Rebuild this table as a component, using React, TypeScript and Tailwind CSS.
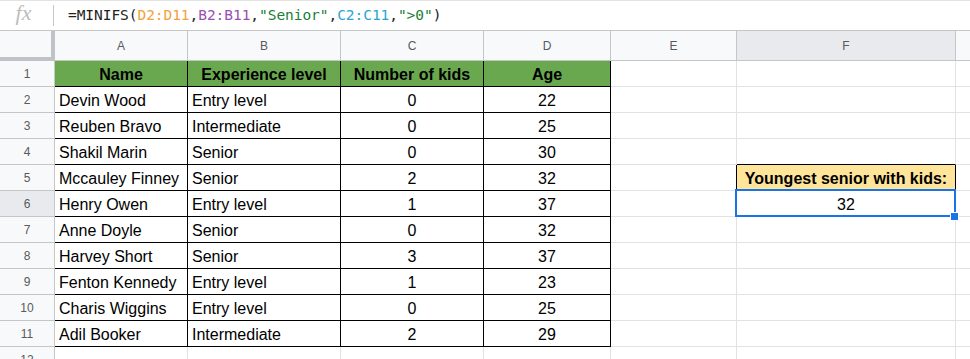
import React from "react";

const rows: [string, string, string, string][] = [
  ["Name", "Experience level", "Number of kids", "Age"],
  ["Devin Wood", "Entry level", "0", "22"],
  ["Reuben Bravo", "Intermediate", "0", "25"],
  ["Shakil Marin", "Senior", "0", "30"],
  ["Mccauley Finney", "Senior", "2", "32"],
  ["Henry Owen", "Entry level", "1", "37"],
  ["Anne Doyle", "Senior", "0", "32"],
  ["Harvey Short", "Senior", "3", "37"],
  ["Fenton Kennedy", "Entry level", "1", "23"],
  ["Charis Wiggins", "Entry level", "0", "25"],
  ["Adil Booker", "Intermediate", "2", "29"],
];

export default function App() {
  const font = { fontFamily: '"Liberation Sans", Arial, sans-serif' };

  return (
    <div className="w-[970px] h-[359px] overflow-hidden bg-white text-black" style={font}>
      {/* formula bar */}
      <div className="h-[31px] border-t border-b border-t-[#e3e3e3] border-b-[#c4c7c5] flex items-center">
        <div className="w-[53px] flex justify-center">
          <span className="italic text-[22px] leading-none text-[#bdbdbd] -mt-[6px] -ml-[6px] font-['Liberation_Serif',serif]">fx</span>
        </div>
        <div className="w-px h-[21px] bg-[#c4c7c5]" />
        <div className="pl-[14px] text-[14.5px] text-[#222] font-['DejaVu_Sans_Mono',monospace] tracking-[-0.05px]">
          =MINIFS(<span className="text-[#f4a13b]">D2:D11</span>,<span className="text-[#9a4fb0]">B2:B11</span>,<span className="text-[#188038]">"Senior"</span>,<span className="text-[#2aa4cf]">C2:C11</span>,<span className="text-[#188038]">"&gt;0"</span>)
        </div>
      </div>

      {/* column headers */}
      <div className="flex h-[30px] text-[12px] text-[#575a5e]">
        <div className="w-[55px] shrink-0 bg-[#f8f9fa] border-r-4 border-b-4 border-[#bfc3c7]" />
        <div className="w-[133px] shrink-0 flex items-center justify-center bg-[#f8f9fa] border-r border-b border-[#c4c7c5]">A</div>
        <div className="w-[153px] shrink-0 flex items-center justify-center bg-[#f8f9fa] border-r border-b border-[#c4c7c5]">B</div>
        <div className="w-[143px] shrink-0 flex items-center justify-center bg-[#f8f9fa] border-r border-b border-[#c4c7c5]">C</div>
        <div className="w-[127px] shrink-0 flex items-center justify-center bg-[#f8f9fa] border-r border-b border-[#c4c7c5]">D</div>
        <div className="w-[126px] shrink-0 flex items-center justify-center bg-[#f8f9fa] border-r border-b border-[#c4c7c5]">E</div>
        <div className="w-[219px] shrink-0 flex items-center justify-center bg-[#e8eaed] border-r border-b border-[#c4c7c5]">F</div>
        <div className="flex-1 bg-[#f8f9fa] border-b border-[#c4c7c5]" />
      </div>

      {/* rows */}
      {Array.from({ length: 12 }, (_, i) => {
        const n = i + 1;
        const data = rows[i];
        const head = n === 1;
        const tbl = data
          ? "border-r border-b border-black " + (head ? "bg-[#6aa84f] font-bold" : "")
          : "border-r border-b border-[#e2e2e2]";
        return (
          <div key={n} className="flex h-[26px] text-[16px]">
            <div
              className={`w-[55px] shrink-0 flex items-center justify-center text-[12px] text-[#575a5e] border-r border-b border-[#c4c7c5] ${
                n === 6 ? "bg-[#e8eaed]" : "bg-[#f8f9fa]"
              }`}
            >
              {n}
            </div>
            <div className={`w-[133px] shrink-0 flex items-center pt-[2px] whitespace-nowrap ${head ? "justify-center" : "pl-[4px]"} ${tbl}`}>
              {data?.[0]}
            </div>
            <div className={`w-[153px] shrink-0 flex items-center pt-[2px] whitespace-nowrap ${head ? "justify-center" : "pl-[4px]"} ${tbl}`}>
              {data?.[1]}
            </div>
            <div className={`w-[143px] shrink-0 flex items-center justify-center pt-[2px] whitespace-nowrap ${tbl}`}>{data?.[2]}</div>
            <div className={`w-[127px] shrink-0 flex items-center justify-center pt-[2px] whitespace-nowrap ${tbl}`}>{data?.[3]}</div>
            <div
              className={`w-[126px] shrink-0 border-b border-b-[#e2e2e2] border-r ${
                n === 5 ? "border-r-black" : "border-r-[#e2e2e2]"
              }`}
            />
            {n === 5 ? (
              <div className="w-[219px] shrink-0 flex items-center justify-center pt-[2px] bg-[#ffe599] font-bold whitespace-nowrap border-r border-b border-black">
                Youngest senior with kids:
              </div>
            ) : n === 6 ? (
              <div className="relative w-[219px] shrink-0 flex items-center justify-center pt-[2px] border-r border-b border-[#e2e2e2]">
                32
                <div className="absolute -top-[2px] -left-[2px] -right-[1px] -bottom-[1px] border-2 border-[#1a73e8]" />
                <div className="absolute -right-[4px] -bottom-[5px] w-[9px] h-[9px] bg-[#1a73e8] border border-white" />
              </div>
            ) : (
              <div
                className={`w-[219px] shrink-0 border-r border-r-[#e2e2e2] border-b ${
                  n === 4 ? "border-b-black" : "border-b-[#e2e2e2]"
                }`}
              />
            )}
            <div className="flex-1 border-b border-[#e2e2e2]" />
          </div>
        );
      })}
    </div>
  );
}
